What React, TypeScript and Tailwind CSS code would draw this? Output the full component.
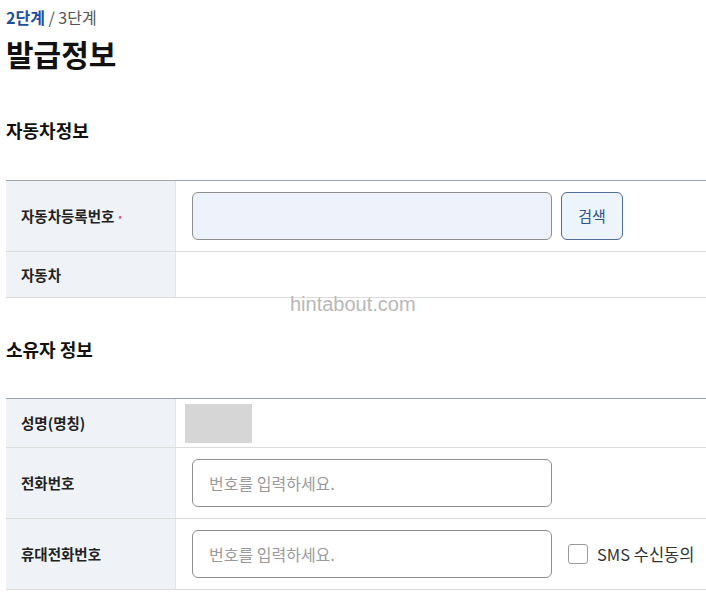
import React from "react";

const font = { fontFamily: '"Noto Sans CJK KR", "Noto Sans", sans-serif' };

function Row({ label, required, children, h }: { label: string; required?: boolean; children?: React.ReactNode; h: string }) {
  return (
    <div className={`flex border-b border-[#dcdcdc] ${h}`}>
      <div className="w-[170px] shrink-0 bg-[#eff2f7] border-r border-[#e2e5ea] flex items-center pl-[15px] text-[14.5px] font-bold text-[#222]">
        {label}
        {required && <span className="ml-[4px] text-[#e0557a] text-[9px] leading-none">•</span>}
      </div>
      <div className="flex-1 flex items-center">{children}</div>
    </div>
  );
}

function TextInput({ placeholder, tinted }: { placeholder?: string; tinted?: boolean }) {
  return (
    <input
      placeholder={placeholder}
      className={`ml-[16px] w-[360px] h-[48px] rounded-[6px] border border-[#8e8e8e] px-[16px] text-[16px] text-[#333] placeholder:text-[#9a9a9a] outline-none ${
        tinted ? "bg-[#eef2fb]" : "bg-white"
      }`}
      style={font}
    />
  );
}

export default function App() {
  return (
    <div className="bg-white w-[706px] h-[602px] overflow-hidden relative" style={font}>
      <div className="pl-[6px] pt-[5px]">
        <div className="text-[16px] leading-[24px]">
          <span className="font-bold text-[#1e4f9f]">2단계</span>
          <span className="text-[#555]"> / 3단계</span>
        </div>
        <h1 className="mt-[4px] text-[30px] leading-[40px] font-bold text-[#111]">발급정보</h1>
        <h2 className="mt-[45px] text-[18px] leading-[24px] font-bold text-[#111]">자동차정보</h2>
      </div>

      <div className="ml-[6px] mt-[38px] border-t border-[#9da3ad]">
        <Row label="자동차등록번호" required h="h-[71px]">
          <TextInput tinted />
          <button className="ml-[9px] w-[62px] h-[48px] rounded-[6px] border border-[#4d6e9e] bg-[#eef4fc] text-[15px] text-[#2f5386]">
            검색
          </button>
        </Row>
        <Row label="자동차" h="h-[46px]" />
      </div>

      <div className="pl-[6px]">
        <h2 className="mt-[39px] text-[18px] leading-[24px] font-bold text-[#111]">소유자 정보</h2>
      </div>

      <div className="ml-[6px] mt-[37px] border-t border-[#9da3ad]">
        <Row label="성명(명칭)" h="h-[49px]">
          <div className="ml-[9px] w-[67px] h-[39px] bg-[#d6d6d6]" />
        </Row>
        <Row label="전화번호" h="h-[71px]">
          <TextInput placeholder="번호를 입력하세요." />
        </Row>
        <Row label="휴대전화번호" h="h-[71px]">
          <TextInput placeholder="번호를 입력하세요." />
          <label className="ml-[16px] flex items-center gap-[9px] text-[16.5px] text-[#333]">
            <span className="w-[20px] h-[20px] rounded-[3px] border border-[#9a9a9a] bg-white" />
            SMS 수신동의
          </label>
        </Row>
      </div>

      <div className="absolute left-[290px] top-[289px] text-[20px] text-[#b8b8b8]" style={{ fontFamily: '"Liberation Sans", sans-serif' }}>
        hintabout.com
      </div>
    </div>
  );
}
